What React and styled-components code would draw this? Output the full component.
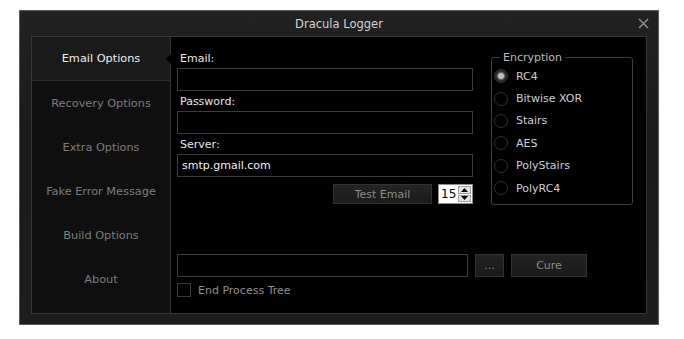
import styled, { createGlobalStyle } from 'styled-components'

const GlobalStyle = createGlobalStyle`
  body {
    margin: 0;
    background: #ffffff;
    font-family: "DejaVu Sans", Verdana, sans-serif;
    font-size: 11px;
  }
`

const tabs = ['Email Options', 'Recovery Options', 'Extra Options', 'Fake Error Message', 'Build Options', 'About']
const algorithms = ['RC4', 'Bitwise XOR', 'Stairs', 'AES', 'PolyStairs', 'PolyRC4']

function App() {
  return (
    <>
      <GlobalStyle />
      <Window>
        <TitleBar>
          Dracula Logger
          <Close>
            <svg width="11" height="11" viewBox="0 0 11 11">
              <path d="M1 1 L10 10 M10 1 L1 10" stroke="#8a8a8a" strokeWidth="1.6" />
            </svg>
          </Close>
        </TitleBar>

        <Body>
          <Sidebar>
            {tabs.map((t, i) => (
              <Tab key={t} $active={i === 0}>{t}</Tab>
            ))}
          </Sidebar>

          <Content>
            <TopRow>
              <Form>
                <Label>Email:</Label>
                <Input />
                <Label>Password:</Label>
                <Input />
                <Label>Server:</Label>
                <Input>smtp.gmail.com</Input>
                <ButtonRow>
                  <Button $w={99} $h={20}>Test Email</Button>
                  <Spin>
                    <SpinValue>15</SpinValue>
                    <SpinArrows>
                      <SpinArrow>
                        <svg width="7" height="4" viewBox="0 0 7 4"><path d="M0 4 L3.5 0 L7 4 Z" fill="#000" /></svg>
                      </SpinArrow>
                      <SpinArrow>
                        <svg width="7" height="4" viewBox="0 0 7 4"><path d="M0 0 L3.5 4 L7 0 Z" fill="#000" /></svg>
                      </SpinArrow>
                    </SpinArrows>
                  </Spin>
                </ButtonRow>
              </Form>

              <Group>
                <Legend>Encryption</Legend>
                {algorithms.map((a, i) => (
                  <RadioRow key={a}>
                    <Radio $checked={i === 0} />
                    {a}
                  </RadioRow>
                ))}
              </Group>
            </TopRow>

            <Bottom>
              <BottomRow>
                <Input $w={291} />
                <Button $w={29} $h={23}>...</Button>
                <Button $w={76} $h={23}>Cure</Button>
              </BottomRow>
              <CheckRow>
                <Check />
                End Process Tree
              </CheckRow>
            </Bottom>
          </Content>
        </Body>
      </Window>
    </>
  )
}

export default App

const Window = styled.div`
  margin: 10px 0 0 19px;
  width: 638px;
  height: 313px;
  border: 1px solid #5a5a5a;
  background: linear-gradient(#222 0%, #1b1b1b 40%, #1d1d1d 100%);
  display: flex;
  flex-direction: column;
`

const TitleBar = styled.div`
  position: relative;
  height: 25px;
  display: flex;
  align-items: center;
  justify-content: center;
  color: #d4d4d4;
  font-size: 11.5px;
`

const Close = styled.div`
  position: absolute;
  right: 9px;
  top: 7px;
  display: flex;
`

const Body = styled.div`
  margin: 0 11px 10px 11px;
  flex: 1;
  display: flex;
  border: 1px solid #383838;
  background: #000;
`

const Sidebar = styled.div`
  width: 138px;
  background: #0f0f0f;
  border-right: 1px solid #333;
  display: flex;
  flex-direction: column;
`

const Tab = styled.div`
  position: relative;
  height: 44px;
  display: flex;
  align-items: center;
  justify-content: center;
  font-size: 11.3px;
  color: ${p => (p.$active ? '#f0f0f0' : '#7d7d7d')};
  background: ${p => (p.$active ? '#1a1a1a' : 'transparent')};
  border-bottom: ${p => (p.$active ? '1px solid #2c2c2c' : 'none')};
  box-sizing: border-box;

  ${p => p.$active && `
    &::after {
      content: '';
      position: absolute;
      right: -1px;
      top: 17px;
      border-style: solid;
      border-width: 5px 5px 5px 0;
      border-color: transparent #000 transparent transparent;
    }
  `}
`

const Content = styled.div`
  flex: 1;
  display: flex;
  flex-direction: column;
  padding: 13px 13px 16px 6px;
`

const TopRow = styled.div`
  display: flex;
  gap: 18px;
  align-items: flex-start;
`

const Form = styled.div`
  width: 296px;
  display: flex;
  flex-direction: column;
`

const Label = styled.div`
  height: 18px;
  line-height: 18px;
  padding-left: 3px;
  color: #e8e8e8;
  margin-top: 2px;

  &:first-child {
    margin-top: 0;
  }
`

const Input = styled.div`
  box-sizing: border-box;
  width: ${p => (p.$w ? `${p.$w}px` : '100%')};
  height: 23px;
  border: 1px solid #3c3c3c;
  background: #000;
  color: #f0f0f0;
  padding-left: 4px;
  display: flex;
  align-items: center;
`

const ButtonRow = styled.div`
  margin-top: 7px;
  display: flex;
  justify-content: flex-end;
  gap: 6px;
`

const Button = styled.div`
  box-sizing: border-box;
  width: ${p => p.$w}px;
  height: ${p => p.$h}px;
  border: 1px solid #333;
  background: linear-gradient(#232323, #1a1a1a);
  color: #8c8c8c;
  display: flex;
  align-items: center;
  justify-content: center;
`

const Spin = styled.div`
  box-sizing: border-box;
  width: 35px;
  height: 20px;
  background: #fff;
  border: 1px solid #8a8a8a;
  display: flex;
  align-items: stretch;
`

const SpinValue = styled.div`
  flex: 1;
  color: #000;
  font-size: 12px;
  display: flex;
  align-items: center;
  padding-left: 2px;
`

const SpinArrows = styled.div`
  width: 13px;
  display: flex;
  flex-direction: column;
  gap: 1px;
  padding: 1px 1px 1px 0;
`

const SpinArrow = styled.div`
  flex: 1;
  background: #e4e4e4;
  border: 1px solid #a0a0a0;
  display: flex;
  align-items: center;
  justify-content: center;
`

const Group = styled.fieldset`
  margin: 1px 0 0 0;
  width: 142px;
  height: 154px;
  box-sizing: border-box;
  border: 1px solid #3e3e3e;
  border-radius: 3px;
  padding: 0 0 0 2px;
  display: flex;
  flex-direction: column;
`

const Legend = styled.legend`
  color: #bcbcbc;
  padding: 0 3px;
  margin-left: 6px;
  line-height: 13px;
`

const RadioRow = styled.div`
  height: 22.4px;
  display: flex;
  align-items: center;
  gap: 8px;
  color: #cfcfcf;

  &:first-of-type {
    margin-top: 1px;
  }
`

const Radio = styled.span`
  box-sizing: border-box;
  width: 14px;
  height: 14px;
  border-radius: 50%;
  border: 1px solid #303030;
  background: ${p => (p.$checked ? 'radial-gradient(circle, #bdbdbd 0 2.5px, #666 3.5px, #262626 5px)' : '#000')};
`

const Bottom = styled.div`
  margin-top: auto;
  display: flex;
  flex-direction: column;
  gap: 6px;
`

const BottomRow = styled.div`
  display: flex;
  gap: 7px;
`

const CheckRow = styled.div`
  display: flex;
  align-items: center;
  gap: 7px;
  color: #8f8f8f;
`

const Check = styled.span`
  box-sizing: border-box;
  width: 14px;
  height: 14px;
  border: 1px solid #3a3a3a;
`
